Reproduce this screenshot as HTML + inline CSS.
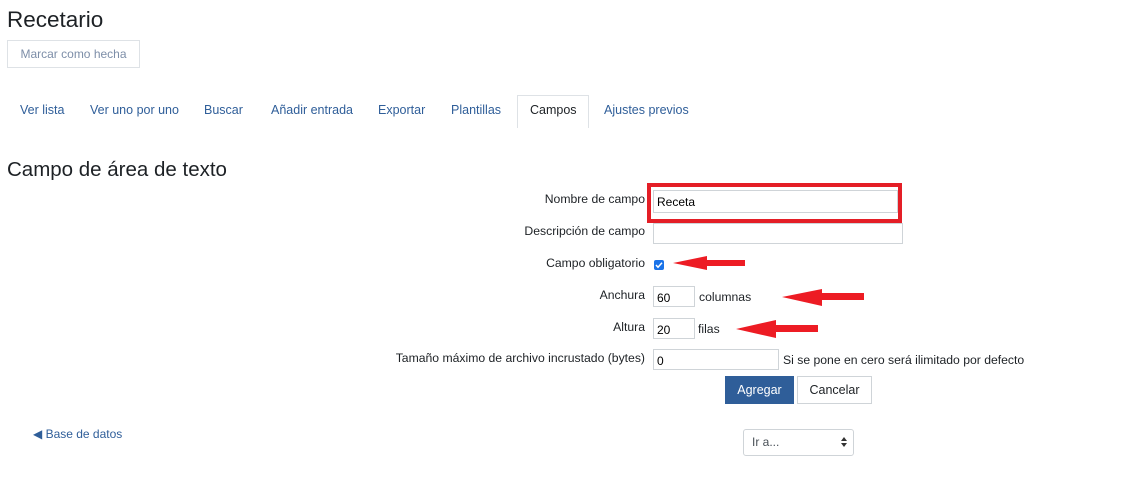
<!DOCTYPE html>
<html><head><meta charset="utf-8"><style>
body{margin:0;width:1137px;height:495px;background:#fff;font-family:"Liberation Sans",sans-serif;color:#1d2125;position:relative;overflow:hidden}
.a{position:absolute;white-space:nowrap}
.lab{position:absolute;right:492px;font-size:12.2px;color:#1d2125}
.inp{position:absolute;border:1px solid #cfd4d8;background:#fff;box-sizing:border-box;font-size:12px;padding:4px 3px;color:#000}
.tab{position:absolute;top:103px;font-size:12.5px;color:#2f5e99}
</style></head><body>
<div class="a" style="left:7px;top:7px;font-size:22.5px;">Recetario</div>
<div class="a" style="left:7px;top:40px;width:131px;height:26px;border:1px solid #dee2e6;font-size:12px;color:#7d8ea8;line-height:26px;text-align:center">Marcar como hecha</div>
<div class="a" style="left:517px;top:95px;width:72px;height:33px;border:1px solid #dee2e6;border-bottom:none;box-sizing:border-box"></div>
<div class="tab" style="left:20px">Ver lista</div>
<div class="tab" style="left:90px">Ver uno por uno</div>
<div class="tab" style="left:204px">Buscar</div>
<div class="tab" style="left:271px">Añadir entrada</div>
<div class="tab" style="left:378px">Exportar</div>
<div class="tab" style="left:451px">Plantillas</div>
<div class="tab" style="left:530px;color:#1d2125">Campos</div>
<div class="tab" style="left:604px">Ajustes previos</div>
<div class="a" style="left:7px;top:158px;font-size:20.5px;">Campo de área de texto</div>

<div class="lab" style="top:192px">Nombre de campo</div>
<div class="a" style="left:647px;top:183px;width:255px;height:40px;border:4px solid #e41e26;box-sizing:border-box"></div>
<div class="inp" style="left:653px;top:190px;width:245px;height:23px">Receta</div>
<div class="lab" style="top:224px">Descripción de campo</div>
<div class="inp" style="left:653px;top:223px;width:250px;height:21px"></div>
<div class="lab" style="top:256px">Campo obligatorio</div>
<div class="a" style="left:654px;top:260px;width:10px;height:10px;background:#1a73e8;border-radius:2px"><svg width="10" height="10" style="position:absolute;left:0;top:0"><path d="M2 5l2 2.2 4-4.4" stroke="#fff" stroke-width="1.5" fill="none"/></svg></div>
<div class="lab" style="top:288px">Anchura</div>
<div class="inp" style="left:653px;top:286px;width:42px;height:21px">60</div>
<div class="a" style="left:699px;top:290px;font-size:12.2px">columnas</div>
<div class="lab" style="top:320px">Altura</div>
<div class="inp" style="left:653px;top:318px;width:42px;height:21px">20</div>
<div class="a" style="left:698px;top:322px;font-size:12.2px">filas</div>
<div class="lab" style="top:351px">Tamaño máximo de archivo incrustado (bytes)</div>
<div class="inp" style="left:653px;top:349px;width:126px;height:21px">0</div>
<div class="a" style="left:783px;top:353px;font-size:12.2px">Si se pone en cero será ilimitado por defecto</div>
<div class="a" style="left:725px;top:376px;width:69px;height:28px;background:#2f5e99;color:#fff;font-size:12.5px;line-height:28px;text-align:center">Agregar</div>
<div class="a" style="left:797px;top:376px;width:75px;height:28px;border:1px solid #cfd4d8;box-sizing:border-box;font-size:12.5px;line-height:26px;text-align:center">Cancelar</div>

<svg class="a" style="left:0;top:0" width="1137" height="495">
<path d="M673 263L707 256L707 260L745 260L745 266L707 266L707 270Z" fill="#ed1c24"/>
<path d="M782 297L822 289L822 293L864 293L864 300L822 300L822 306Z" fill="#ed1c24"/>
<path d="M736 329L776 320L776 325L818 325L818 332L776 332L776 338Z" fill="#ed1c24"/>
<path d="M841 441L844 437L847 441Z M841 443L844 447L847 443Z" fill="#333"/>
</svg>

<div class="a" style="left:33px;top:427px;font-size:12px;color:#2f5e99">◀ Base de datos</div>
<div class="a" style="left:743px;top:429px;width:111px;height:27px;border:1px solid #cfd4d8;border-radius:3px;box-sizing:border-box;font-size:12px;color:#495057;line-height:25px;padding-left:8px">Ir a...</div>
</body></html>
